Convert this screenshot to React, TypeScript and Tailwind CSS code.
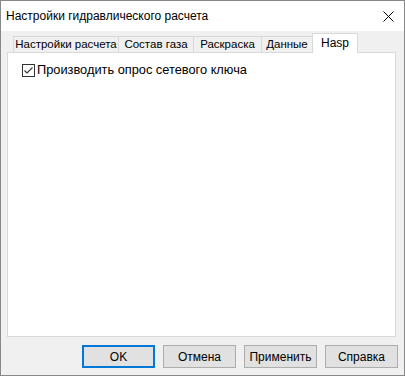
const FONT = "font-['Liberation_Sans',Arial,sans-serif]";

const TABS = [
  { label: "Настройки расчета", width: "w-[105px]" },
  { label: "Состав газа", width: "w-[75px]" },
  { label: "Раскраска", width: "w-[68px]" },
  { label: "Данные", width: "w-[51px]" },
];

function CloseIcon() {
  return (
    <svg width="11" height="11" viewBox="0 0 11 11" className="block">
      <path d="M0.5 0.5 L10.5 10.5 M10.5 0.5 L0.5 10.5" stroke="#000" strokeWidth="1" />
    </svg>
  );
}

function CheckBox() {
  return (
    <span className="flex h-[13px] w-[13px] shrink-0 items-center justify-center border border-[#333] bg-white">
      <svg width="11" height="11" viewBox="0 0 11 11" className="block">
        <path d="M1.5 5.5 L4 8 L9.5 2.5" fill="none" stroke="#333" strokeWidth="1.1" />
      </svg>
    </span>
  );
}

function DialogButton({ label, primary }: { label: string; primary?: boolean }) {
  return (
    <button
      className={
        primary
          ? "h-[23px] w-[73px] border-2 border-[#0078d7] bg-[#e1e1e1] text-[12px] font-normal text-black"
          : "h-[23px] w-[73px] border border-[#adadad] bg-[#e1e1e1] text-[12px] font-normal text-black"
      }
    >
      {label}
    </button>
  );
}

export default function App() {
  return (
    <div className={`${FONT} flex h-[376px] w-[405px] flex-col border border-[#888] bg-[#f0f0f0] text-black`}>
      <div className="flex h-[30px] items-center justify-between bg-white pl-[5px] pr-[10px]">
        <span className="text-[12px] leading-none">Настройки гидравлического расчета</span>
        <CloseIcon />
      </div>

      <div className="flex flex-1 flex-col px-[6px] pt-[2px] pb-[7px]">
        <div className="flex h-[19px] items-end pl-[6px]">
          {TABS.map((tab) => (
            <div
              key={tab.label}
              className={`${tab.width} flex h-[16px] items-center justify-center whitespace-nowrap border-l border-t border-[#d9d9d9] text-[11.5px] leading-none`}
            >
              {tab.label}
            </div>
          ))}
          <div className="relative z-10 -mb-px flex h-[20px] w-[46px] items-start justify-center border-x border-t border-[#d9d9d9] bg-white pt-[3px] text-[12px] leading-none">
            Hasp
          </div>
        </div>

        <div className="h-[285px] w-[389px] border border-[#d9d9d9] bg-white pl-[14px] pt-[11px]">
          <label className="flex items-center gap-[2px] text-[12.8px] leading-none">
            <CheckBox />
            <span>Производить опрос сетевого ключа</span>
          </label>
        </div>

        <div className="mt-[8px] flex gap-[8px] pl-[75px]">
          <DialogButton label="OK" primary />
          <DialogButton label="Отмена" />
          <DialogButton label="Применить" />
          <DialogButton label="Справка" />
        </div>
      </div>
    </div>
  );
}
